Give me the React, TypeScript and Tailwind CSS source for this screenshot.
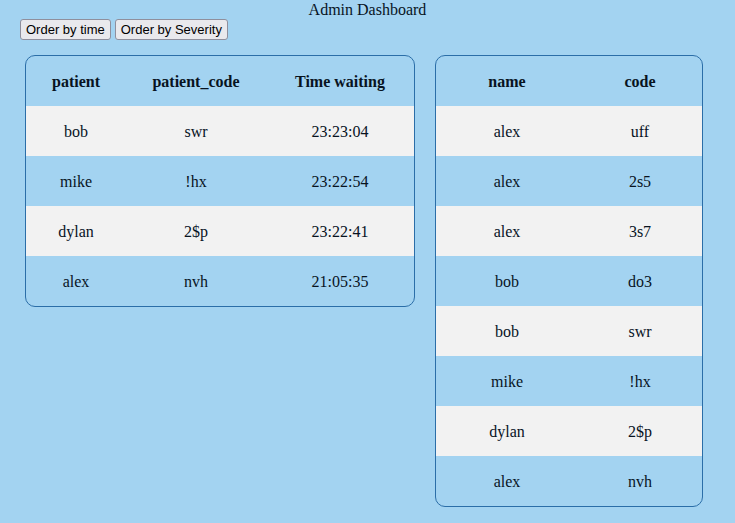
import React from "react";

type Wait = { patient: string; code: string; time: string };
type Row = { name: string; code: string };

const waiting: Wait[] = [
    { patient: "bob", code: "swr", time: "23:23:04" },
    { patient: "mike", code: "!hx", time: "23:22:54" },
    { patient: "dylan", code: "2$p", time: "23:22:41" },
    { patient: "alex", code: "nvh", time: "21:05:35" },
];

const patients: Row[] = [
    { name: "alex", code: "uff" },
    { name: "alex", code: "2s5" },
    { name: "alex", code: "3s7" },
    { name: "bob", code: "do3" },
    { name: "bob", code: "swr" },
    { name: "mike", code: "!hx" },
    { name: "dylan", code: "2$p" },
    { name: "alex", code: "nvh" },
];

export default function App() {
    return (
        <div className="min-h-[523px] w-full bg-[#a3d3f1] text-[#08131f] font-['Liberation_Serif',serif] text-[16px]">
            <h1 className="text-center leading-[18px] pt-[1px]">Admin Dashboard</h1>
            <div className="flex gap-[4px] pl-[20px]">
                <button className="h-[21px] px-[5px] rounded-[3px] border border-[#8f8f9d] bg-[#e9e9ed] text-[13px] text-black font-['Liberation_Sans',sans-serif]">Order by time</button>
                <button className="h-[21px] px-[5px] rounded-[3px] border border-[#8f8f9d] bg-[#e9e9ed] text-[13px] text-black font-['Liberation_Sans',sans-serif]">Order by Severity</button>
            </div>
            <div className="flex items-start gap-[20px] pl-[25px] pt-[15px]">
                <div className="w-[390px] rounded-[10px] border border-[#2b6ea8] overflow-hidden">
                    <div className="grid grid-cols-[100px_140px_1fr] h-[50px] pt-[2px] items-center text-center font-bold">
                        <div>patient</div>
                        <div>patient_code</div>
                        <div>Time waiting</div>
                    </div>
                    {waiting.map((w, index) => (
                        <div key={index} className={"grid grid-cols-[100px_140px_1fr] h-[50px] pt-[2px] items-center text-center " + (index % 2 === 0 ? "bg-[#f2f2f2]" : "")}>
                            <div>{w.patient}</div>
                            <div>{w.code}</div>
                            <div>{w.time}</div>
                        </div>
                    ))}
                </div>
                <div className="w-[268px] rounded-[10px] border border-[#2b6ea8] overflow-hidden">
                    <div className="grid grid-cols-[142px_1fr] h-[50px] pt-[2px] items-center text-center font-bold">
                        <div>name</div>
                        <div>code</div>
                    </div>
                    {patients.map((p, index) => (
                        <div key={index} className={"grid grid-cols-[142px_1fr] h-[50px] pt-[2px] items-center text-center " + (index % 2 === 0 ? "bg-[#f2f2f2]" : "")}>
                            <div>{p.name}</div>
                            <div>{p.code}</div>
                        </div>
                    ))}
                </div>
            </div>
        </div>
    );
}
